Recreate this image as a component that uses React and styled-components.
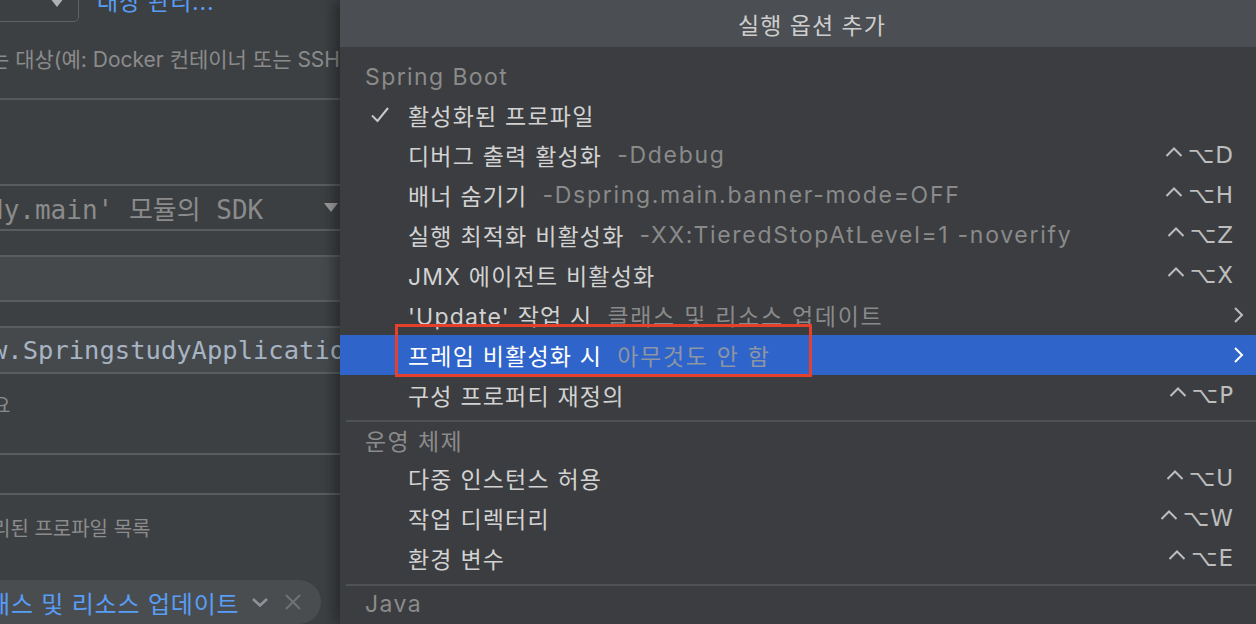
import styled, { createGlobalStyle } from 'styled-components';

const GlobalStyle = createGlobalStyle`
  html, body {
    margin: 0;
    padding: 0;
    overflow: hidden;
    background: #3c3f41;
  }
  body {
    font-family: Inter, "Noto Sans CJK KR", sans-serif;
  }
`;

const Root = styled.div`
  display: flex;
  width: 1256px;
  height: 624px;
  overflow: hidden;
  background: #3d4043;
`;

/* ---------- left: run configuration form (cropped) ---------- */

const LeftPanel = styled.div`
  width: 340px;
  flex-shrink: 0;
  display: flex;
  flex-direction: column;
  overflow: hidden;
  background: #3d4043;
  color: #8b8b8b;
`;

const TargetRow = styled.div`
  display: flex;
  align-items: center;
  gap: 18px;
  height: 40px;
  margin-top: -18px;
`;

const TargetSelect = styled.div`
  width: 90px;
  height: 40px;
  margin-left: -11px;
  box-sizing: border-box;
  border: 1px solid #5f6164;
  border-radius: 5px;
  display: flex;
  align-items: center;
  justify-content: flex-end;
  padding-right: 14px;
`;

const Link = styled.span`
  color: #589df6;
  font-size: 23px;
  line-height: 26px;
  letter-spacing: 0.8px;
`;

const Hint = styled.div`
  margin-top: ${(p) => p.$top}px;
  margin-left: ${(p) => p.$indent || 0}px;
  height: 24px;
  line-height: 24px;
  font-size: ${(p) => p.$size || 20}px;
  white-space: nowrap;
  color: #8b8b8b;
`;

const Rule = styled.div`
  margin-top: ${(p) => p.$top}px;
  height: 2px;
  background: #56585b;
`;

const Field = styled.div`
  margin-top: ${(p) => p.$top}px;
  height: ${(p) => p.$height}px;
  box-sizing: border-box;
  border-top: 2px solid #5a5c5f;
  border-bottom: 2px solid #5a5c5f;
  background: ${(p) => (p.$light ? '#46494c' : '#3c3f42')};
  display: flex;
  align-items: center;
  justify-content: space-between;
  padding-right: 2px;
  white-space: nowrap;
  overflow: hidden;
`;

const MonoText = styled.span`
  font-family: "DejaVu Sans Mono", "Noto Sans CJK KR", monospace;
  font-size: ${(p) => p.$size}px;
  margin-left: ${(p) => p.$indent}px;
  color: ${(p) => p.$color};
`;

const ChipRow = styled.div`
  display: flex;
  align-items: center;
  margin-top: 39px;
  gap: 19px;
`;

const Chip = styled.div`
  height: 44px;
  flex-shrink: 0;
  display: flex;
  align-items: center;
  gap: 16px;
  margin-left: -30px;
  padding: 0 20px 0 30px;
  border-radius: 22px;
  background: #4a4d50;
  white-space: nowrap;
`;

const ChipText = styled.span`
  color: #589df6;
  font-size: 24px;
  letter-spacing: 0.8px;
  margin-left: -12px;
  margin-right: -4px;
`;

const GhostChip = styled.div`
  width: 80px;
  height: 44px;
  flex-shrink: 0;
  border-radius: 22px;
  background: #45484b;
`;

/* ---------- right: "add run options" popup ---------- */

const Popup = styled.div`
  flex: 1;
  display: flex;
  flex-direction: column;
  background: #3b3d40;
  box-shadow: -6px 0 12px rgba(0, 0, 0, 0.35);
  position: relative;
  z-index: 1;
  color: #d2d2d2;
  font-size: 23px;
`;

const Header = styled.div`
  height: 47px;
  flex-shrink: 0;
  display: flex;
  align-items: center;
  justify-content: center;
  padding-left: 28px;
  background: #4b4e52;
  color: #cdcdcd;
  letter-spacing: 1px;
`;

const Body = styled.div`
  padding-top: 12px;
  display: flex;
  flex-direction: column;
`;

const GroupLabel = styled.div`
  height: 36px;
  display: flex;
  align-items: center;
  padding-left: 25px;
  color: #8b8b8b;
  letter-spacing: 1.4px;
`;

const Separator = styled.div`
  height: 2px;
  margin: ${(p) => p.$top}px 0 0 6px;
  background: #4f5255;
`;

const Item = styled.div`
  position: relative;
  height: 40px;
  flex-shrink: 0;
  display: flex;
  align-items: center;
  padding: 0 12px 0 30px;
  white-space: nowrap;
  background: ${(p) => (p.$selected ? '#2f65ca' : 'transparent')};
  color: ${(p) => (p.$selected ? '#ffffff' : '#d2d2d2')};
`;

const CheckCell = styled.span`
  width: 38px;
  flex-shrink: 0;
  display: flex;
  align-items: center;
`;

const Label = styled.span`
  letter-spacing: 1.2px;
`;

const ItemHint = styled.span`
  margin-left: 15px;
  letter-spacing: 1.7px;
  color: ${(p) => (p.$selected ? '#8e95a3' : '#8a8a8a')};
`;

const Shortcut = styled.span`
  margin-left: auto;
  margin-right: 11px;
  display: flex;
  align-items: center;
  color: #bdbdbd;
  font-family: "DejaVu Sans", Inter, sans-serif;
  font-size: 23px;
`;

const ControlKey = styled.svg`
  margin: 0 5px 7px 0;
`;

const Modifier = styled.span`
  margin-right: 1px;
`;

const SubArrow = styled.span`
  margin-left: auto;
  display: flex;
  align-items: center;
`;

const Marker = styled.div`
  position: absolute;
  left: 55px;
  top: -11px;
  width: 417px;
  height: 53px;
  box-sizing: border-box;
  border: 3px solid #e5402b;
  pointer-events: none;
`;

const DownTriangle = ({ color = '#9a9a9a' }) => (
  <svg width="14" height="9" viewBox="0 0 14 9">
    <path d="M0 0 L14 0 L7 9 Z" fill={color} />
  </svg>
);

const Check = () => (
  <svg width="20" height="18" viewBox="0 0 20 18">
    <polyline points="2,9.5 7.5,15 18,2" fill="none" stroke="#c8c8c8" strokeWidth="2" />
  </svg>
);

const ChevronRight = ({ color }) => (
  <svg width="12" height="18" viewBox="0 0 12 18">
    <polyline points="3,2 10,9 3,16" fill="none" stroke={color} strokeWidth="2" />
  </svg>
);

const ChevronDown = () => (
  <svg width="18" height="12" viewBox="0 0 18 12">
    <polyline points="2,3 9,9.5 16,3" fill="none" stroke="#8f9399" strokeWidth="2.6" />
  </svg>
);

const Cross = () => (
  <svg width="16" height="16" viewBox="0 0 16 16">
    <path d="M1 1 L15 15 M15 1 L1 15" stroke="#6f7276" strokeWidth="2" />
  </svg>
);

const springItems = [
  { label: '활성화된 프로파일', checked: true },
  { label: '디버그 출력 활성화', hint: '-Ddebug', key: 'D' },
  { label: '배너 숨기기', hint: '-Dspring.main.banner-mode=OFF', key: 'H' },
  { label: '실행 최적화 비활성화', hint: '-XX:TieredStopAtLevel=1 -noverify', key: 'Z' },
  { label: 'JMX 에이전트 비활성화', key: 'X' },
  { label: "'Update' 작업 시", hint: '클래스 및 리소스 업데이트', submenu: true },
  { label: '프레임 비활성화 시', hint: '아무것도 안 함', submenu: true, selected: true, marked: true },
  { label: '구성 프로퍼티 재정의', key: 'P' },
];

const osItems = [
  { label: '다중 인스턴스 허용', key: 'U' },
  { label: '작업 디렉터리', key: 'W' },
  { label: '환경 변수', key: 'E' },
];

const MenuItem = ({ item }) => (
  <Item $selected={item.selected}>
    <CheckCell>{item.checked && <Check />}</CheckCell>
    <Label>{item.label}</Label>
    {item.hint && <ItemHint $selected={item.selected}>{item.hint}</ItemHint>}
    {item.key && (
      <Shortcut>
        <ControlKey width="18" height="10" viewBox="0 0 18 10">
          <polyline points="1.5,9 9,1.5 16.5,9" fill="none" stroke="#bdbdbd" strokeWidth="2" />
        </ControlKey>
        <Modifier>⌥</Modifier>
        {item.key}
      </Shortcut>
    )}
    {item.submenu && (
      <SubArrow>
        <ChevronRight color={item.selected ? '#ffffff' : '#bdbdbd'} />
      </SubArrow>
    )}
    {item.marked && <Marker />}
  </Item>
);

const App = () => {
  return (
    <Root>
      <GlobalStyle />
      <LeftPanel>
        <TargetRow>
          <TargetSelect>
            <DownTriangle color="#b0b0b0" />
          </TargetSelect>
          <Link>대상 관리...</Link>
        </TargetRow>
        <Hint $top={26} $indent={-10} $size={21}>
          는 대상(예: Docker 컨테이너 또는 SSH 서버)
        </Hint>
        <Rule $top={26} />
        <Field $top={84} $height={48}>
          <MonoText $size={26} $indent={-12} $color="#8b8b8b">
            dy.main' 모듈의 SDK
          </MonoText>
          <DownTriangle />
        </Field>
        <Field $top={24} $height={48} $light />
        <Field $top={24} $height={48} $light>
          <MonoText $size={25.5} $indent={-8} $color="#a7b4c4">
            w.SpringstudyApplication
          </MonoText>
        </Field>
        <Hint $top={20} $indent={-8}>
          요
        </Hint>
        <Field $top={35} $height={43} />
        <Hint $top={22} $indent={-8}>
          리된 프로파일 목록
        </Hint>
        <ChipRow>
          <Chip>
            <ChipText>래스 및 리소스 업데이트</ChipText>
            <ChevronDown />
            <Cross />
          </Chip>
          <GhostChip />
        </ChipRow>
      </LeftPanel>

      <Popup>
        <Header>실행 옵션 추가</Header>
        <Body>
          <GroupLabel>Spring Boot</GroupLabel>
          {springItems.map((item) => (
            <MenuItem key={item.label} item={item} />
          ))}
          <Separator $top={5} />
          <GroupLabel>운영 체제</GroupLabel>
          {osItems.map((item) => (
            <MenuItem key={item.label} item={item} />
          ))}
          <Separator $top={6} />
          <GroupLabel>Java</GroupLabel>
        </Body>
      </Popup>
    </Root>
  );
};

export default App;
